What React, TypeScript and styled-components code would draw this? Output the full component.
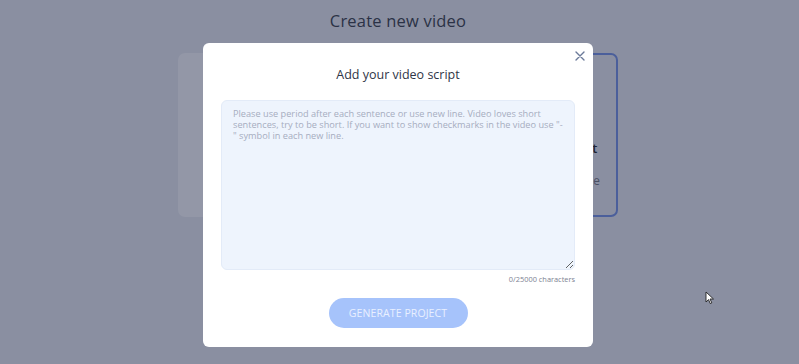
import React from 'react';
import styled, { createGlobalStyle } from 'styled-components';

const GlobalStyle = createGlobalStyle`
  html, body {
    margin: 0;
    padding: 0;
    background: #8a8fa1;
    font-family: 'Open Sans', 'Liberation Sans', sans-serif;
  }
  * {
    box-sizing: border-box;
  }
`;

const Page = styled.div`
  width: 799px;
  height: 364px;
  display: flex;
  flex-direction: column;
  align-items: center;
  padding-top: 9px;
  padding-right: 3px;
  overflow: hidden;
`;

const PageTitle = styled.h1`
  margin: 0;
  font-size: 16.5px;
  font-weight: 500;
  color: #2b3246;
  letter-spacing: 0.2px;
`;

const Cards = styled.div`
  display: grid;
  grid-template-columns: 212px 212px;
  gap: 16px;
  margin-top: 21px;
`;

const Card = styled.div<{ $active?: boolean }>`
  height: 164px;
  border-radius: 7px;
  background: ${(p) => (p.$active ? '#8a8fa1' : '#9397a7')};
  border: 2px solid ${(p) => (p.$active ? '#4b5f9b' : 'transparent')};
  display: flex;
  flex-direction: column;
  align-items: center;
  padding: 20px 4px 0;
  color: #1e2331;
  text-align: center;
  white-space: nowrap;
`;

const CardIcon = styled.div`
  width: 30px;
  height: 30px;
  border-right: 3px solid #6d7592;
`;

const CardTitle = styled.div`
  margin-top: 35px;
  font-size: 12.8px;
  line-height: 17px;
  font-weight: 600;
`;

const CardText = styled.div`
  margin-top: 15px;
  font-size: 11.8px;
  line-height: 16px;
  color: #4a5064;
`;

const Overlay = styled.div`
  position: fixed;
  inset: 0;
  display: flex;
  justify-content: center;
  align-items: flex-start;
  padding-top: 43px;
  padding-right: 3px;
`;

const Modal = styled.div`
  position: relative;
  width: 390px;
  height: 304px;
  background: #ffffff;
  border-radius: 6px;
  padding: 24px 18px 19px;
  display: flex;
  flex-direction: column;
  align-items: stretch;
`;

const Close = styled.button`
  position: absolute;
  top: 6px;
  right: 6px;
  width: 14px;
  height: 14px;
  padding: 0;
  border: none;
  background: none;
  display: flex;
  align-items: center;
  justify-content: center;
  cursor: pointer;
`;

const Heading = styled.h2`
  margin: 0;
  text-align: center;
  font-size: 12.5px;
  font-weight: 400;
  color: #2f3547;
  line-height: 16px;
`;

const ScriptArea = styled.textarea`
  margin-top: 17px;
  height: 170px;
  width: 100%;
  resize: vertical;
  border: 1px solid #e3ebf8;
  border-radius: 6px;
  background: #eef4fd;
  padding: 7px 8px 7px 11px;
  font-family: 'Open Sans', 'Liberation Sans', sans-serif;
  font-size: 9.2px;
  line-height: 11px;
  color: #2f3547;
  outline: none;
  &::placeholder {
    color: #a6adbf;
  }
`;

const Counter = styled.div`
  margin-top: 4px;
  text-align: right;
  font-size: 7.4px;
  color: #7c8292;
`;

const Generate = styled.button`
  align-self: center;
  margin-top: auto;
  width: 139px;
  height: 30px;
  border: none;
  border-radius: 15px;
  background: #a6c3fb;
  color: #e9f0ff;
  font-family: 'Open Sans', 'Liberation Sans', sans-serif;
  font-size: 10.5px;
  font-weight: 500;
  letter-spacing: 0.1px;
  cursor: pointer;
`;

const Pointer = styled.svg`
  position: fixed;
  left: 705px;
  top: 291px;
`;

const placeholder =
  'Please use period after each sentence or use new line. Video loves short\n' +
  'sentences, try to be short. If you want to show checkmarks in the video use "-\n' +
  '" symbol in each new line.';

export default function App() {
  return (
    <>
      <GlobalStyle />
      <Page>
        <PageTitle>Create new video</PageTitle>
        <Cards>
          <Card>
            <CardIcon />
            <CardTitle>Create video from a link</CardTitle>
            <CardText>Paste a link to your site</CardText>
          </Card>
          <Card $active>
            <CardIcon />
            <CardTitle>Create a video from a script</CardTitle>
            <CardText>Use your own text to create one</CardText>
          </Card>
        </Cards>
      </Page>
      <Overlay>
        <Modal>
          <Close aria-label="Close">
            <svg width="10" height="10" viewBox="0 0 10 10">
              <path d="M1 1L9 9M9 1L1 9" stroke="#6b7a99" strokeWidth="1.4" strokeLinecap="round" />
            </svg>
          </Close>
          <Heading>Add your video script</Heading>
          <ScriptArea placeholder={placeholder} />
          <Counter>0/25000 characters</Counter>
          <Generate>GENERATE PROJECT</Generate>
        </Modal>
      </Overlay>
      <Pointer width="10" height="14" viewBox="0 0 10 14">
        <path d="M1 1L1 11L3.5 8.6L5.3 12.6L6.8 11.9L5 8H8.5Z" fill="#ffffff" stroke="#222" strokeWidth="0.9" strokeLinejoin="round" />
      </Pointer>
    </>
  );
}
